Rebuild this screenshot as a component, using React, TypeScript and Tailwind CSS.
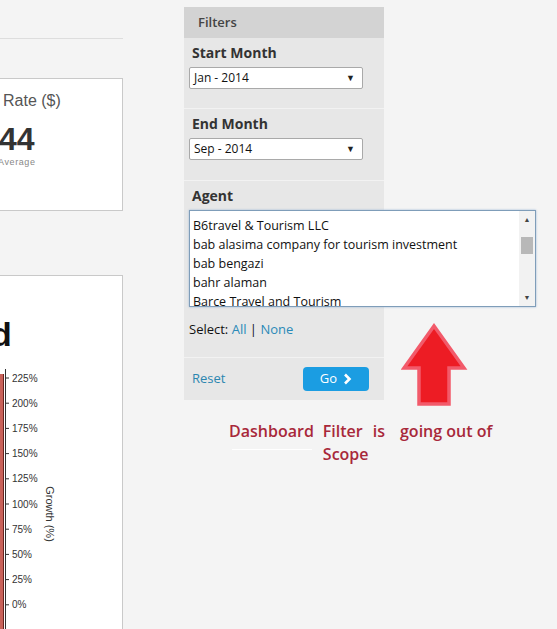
const agents = [
  "B6travel & Tourism LLC",
  "bab alasima company for tourism investment",
  "bab bengazi",
  "bahr alaman",
  "Barce Travel and Tourism",
]

const ticks = ["225%", "200%", "175%", "150%", "125%", "100%", "75%", "50%", "25%", "0%"]

function MonthSelect({ value }: { value: string }) {
  return (
    <div className="flex h-[22px] w-[174px] items-center justify-between rounded-[2px] border border-[#a9a9a9] bg-white pl-[4px] pr-[7px] text-[12px] text-[#111]">
      <span>{value}</span>
      <span className="text-[9px] text-[#222]">▼</span>
    </div>
  )
}

function Chart() {
  return (
    <svg width="122" height="265" className="block" style={{ fontFamily: "'Liberation Sans', Arial, sans-serif" }}>
      <rect x="0" y="10" width="3" height="260" fill="#c9625a" />
      <line x1="3.5" y1="10" x2="3.5" y2="270" stroke="#6b2420" />
      <line x1="5.5" y1="5" x2="5.5" y2="265" stroke="#333" />
      {ticks.map((t, i) => {
        const y = 14 + i * 25.2
        return (
          <g key={t}>
            <line x1="5" y1={y} x2="9" y2={y} stroke="#333" />
            <text x="12" y={y + 1} fontSize="10" fill="#333" dominantBaseline="middle">
              {t}
            </text>
          </g>
        )
      })}
      <text x="46" y="150" fontSize="11" fill="#333" textAnchor="middle" transform="rotate(90 46 150)">
        Growth (%)
      </text>
    </svg>
  )
}

export default function App() {
  return (
    <div className="relative h-[629px] w-[557px] overflow-hidden bg-[#f4f4f4] font-['Open_Sans',sans-serif]">
      <div className="flex items-start">
        {/* dashboard column, cut off at the left */}
        <div className="w-[123px] shrink-0 font-['Liberation_Sans',Arial,sans-serif]">
          <div className="h-[39px] border-b border-[#dddddd]" />
          <div className="mt-[39px] h-[133px] border-y border-r border-[#c9c9c9] bg-white">
            <p className="mt-[12px] pl-[3px] text-[16px] leading-[20px] text-[#555]">Rate ($)</p>
            <p className="-ml-[1px] mt-[12px] text-[32px] font-bold leading-[32px] text-[#333]">44</p>
            <p className="-ml-[2px] mt-[1px] text-[9px] leading-[12px] tracking-[0.6px] text-[#888]">Average</p>
          </div>
          <div className="mt-[64px] h-[360px] border-t border-r border-[#c9c9c9] bg-white">
            <p className="-ml-[9px] mt-[40px] text-[34px] font-bold leading-[36px] text-[#111]">d</p>
            <div className="mt-[12px]">
              <Chart />
            </div>
          </div>
        </div>

        {/* filter panel */}
        <div className="ml-[61px] mt-[7px] w-[200px] shrink-0 bg-[#e7e7e7]">
          <div className="flex h-[31px] items-center bg-[#d3d3d3] pl-[14px] text-[13px] font-semibold text-[#444]">
            Filters
          </div>
          <div className="h-[71px] border-b border-[#f2f2f2] px-[5px] pt-[6px]">
            <p className="pl-[3px] text-[14px] font-bold leading-[18px] text-[#333]">Start Month</p>
            <div className="mt-[5px]">
              <MonthSelect value="Jan - 2014" />
            </div>
          </div>
          <div className="h-[72px] border-b border-[#f2f2f2] px-[5px] pt-[6px]">
            <p className="pl-[3px] text-[14px] font-bold leading-[18px] text-[#333]">End Month</p>
            <div className="mt-[5px]">
              <MonthSelect value="Sep - 2014" />
            </div>
          </div>
          <div className="h-[177px] border-b border-[#f2f2f2] px-[5px] pt-[6px]">
            <p className="pl-[3px] text-[14px] font-bold leading-[18px] text-[#333]">Agent</p>
            <div className="mt-[5px] flex h-[97px] w-[347px] border border-[#7f9db9] bg-white shadow-[0_0_2px_#9cb6d6]">
              <div className="flex-1 overflow-hidden pl-[3px] pt-[5px] text-[12.5px] leading-[19px] text-[#111]">
                {agents.map((a) => (
                  <p key={a} className="whitespace-nowrap">
                    {a}
                  </p>
                ))}
              </div>
              <div className="flex w-[16px] flex-col items-center bg-[#f2f2f2]">
                <span className="mt-[5px] text-[7px] leading-[8px] text-[#444]">▲</span>
                <div className="mt-[13px] h-[17px] w-[12px] bg-[#b8b8b8]" />
                <span className="mt-auto mb-[4px] text-[7px] leading-[8px] text-[#444]">▼</span>
              </div>
            </div>
            <p className="mt-[13px] text-[13px] leading-[18px] text-[#111]">
              Select: <span className="text-[#2a8ab8]">All</span> | <span className="text-[#2a8ab8]">None</span>
            </p>
          </div>
          <div className="flex h-[42px] items-center justify-between pl-[8px] pr-[15px]">
            <span className="text-[13px] text-[#2b86b0]">Reset</span>
            <div className="flex h-[24px] w-[66px] items-center justify-center gap-[6px] rounded-[4px] bg-[#1b9de2] text-[13px] text-white">
              Go
              <svg width="9" height="12" viewBox="0 0 9 12">
                <path d="M2 1.5 L6.5 6 L2 10.5" fill="none" stroke="white" strokeWidth="2.6" />
              </svg>
            </div>
          </div>
        </div>
      </div>

      {/* annotation drawn over the screenshot */}
      <svg className="absolute left-[401px] top-[322px]" width="68" height="86" viewBox="0 0 68 86">
        <path
          d="M33 4 L63 46 L48 46 L48 82 L18 82 L18 46 L3 46 Z"
          fill="#ed1c24"
          stroke="#f25a6a"
          strokeWidth="3.5"
          strokeLinejoin="miter"
        />
      </svg>
      <div className="absolute left-[229px] top-[420px] flex text-[16px] font-semibold leading-[23px] text-[#a8283a]">
        <div>
          <p>Dashboard</p>
          <div className="ml-[3px] mt-[6px] h-[1px] w-[80px] bg-white" />
        </div>
        <div className="ml-[9px]">
          <p>
            Filter<span className="ml-[10px]">is</span>
          </p>
          <p>Scope</p>
        </div>
        <p className="ml-[15px]">going out of</p>
      </div>
    </div>
  )
}
